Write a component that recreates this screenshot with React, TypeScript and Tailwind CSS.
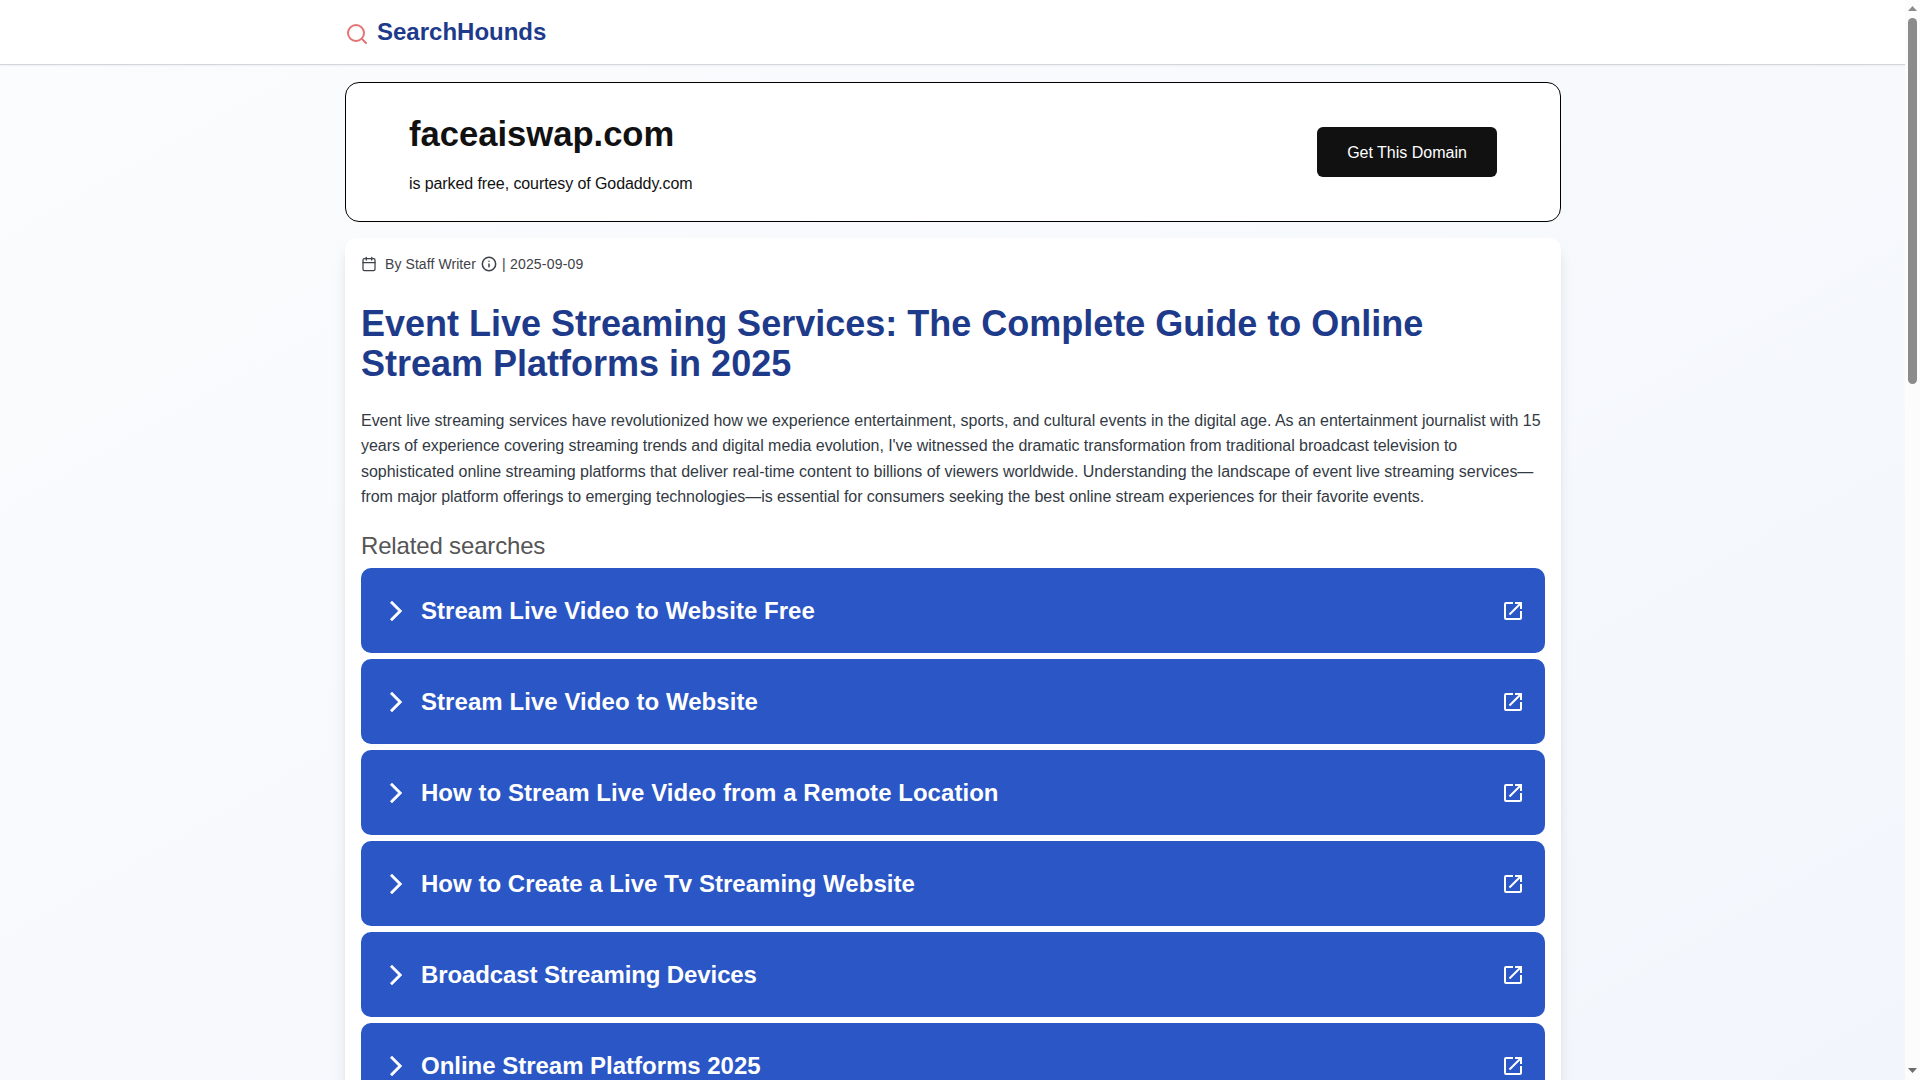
import { Calendar, Info, Search } from "lucide-react";
import { MdOpenInNew } from "react-icons/md";

const paragraph = [
  { text: "Event live streaming services have revolutionized how we experience entertainment, sports, and cultural events in the digital age. As an entertainment journalist with 15", spacing: "tracking-[-0.03px]" },
  { text: "years of experience covering streaming trends and digital media evolution, I've witnessed the dramatic transformation from traditional broadcast television to", spacing: "tracking-[-0.05px]" },
  { text: "sophisticated online streaming platforms that deliver real-time content to billions of viewers worldwide. Understanding the landscape of event live streaming services—", spacing: "tracking-[-0.02px]" },
  { text: "from major platform offerings to emerging technologies—is essential for consumers seeking the best online stream experiences for their favorite events.", spacing: "tracking-[-0.06px]" }
];

const searches = [
  { text: "Stream Live Video to Website Free", spacing: "tracking-[0.04px]" },
  { text: "Stream Live Video to Website", spacing: "tracking-[0.06px]" },
  { text: "How to Stream Live Video from a Remote Location", spacing: "tracking-[0.04px]" },
  { text: "How to Create a Live Tv Streaming Website", spacing: "tracking-[0.02px]" },
  { text: "Broadcast Streaming Devices", spacing: "tracking-[-0.11px]" },
  { text: "Online Stream Platforms 2025", spacing: "tracking-[-0.02px]" }
];

function Header() {
  return (
    <header className="h-[65px] shrink-0 bg-white border-b border-gray-300 shadow-xs">
      <div className="w-[1216px] ml-[345px] h-16 flex items-center gap-2">
        <Search className="w-6 h-6 text-[#e57373] mt-[3px]" strokeWidth={2} />
        <span className="text-2xl font-bold text-[#1e3a8a]">SearchHounds</span>
      </div>
    </header>
  );
}

function DomainBanner() {
  return (
    <section className="h-[140px] shrink-0 bg-white border border-black rounded-[14px] px-[63px] flex items-center justify-between">
      <div className="text-[#111] pt-[5px]">
        <h2 className="text-[34.6px] leading-[40px] font-bold">faceaiswap.com</h2>
        <p className="text-base mt-[18px] tracking-[-0.09px]">is parked free, courtesy of Godaddy.com</p>
      </div>
      <button className="w-[180px] h-[50px] pt-px rounded-md bg-[#111] text-white text-base">Get This Domain</button>
    </section>
  );
}

function ChevronIcon() {
  return (
    <svg className="w-6 h-6 mr-[13px]" viewBox="0 0 24 24" fill="currentColor" stroke="currentColor" strokeWidth={0.5}>
      <path d="M6.23 20.23 8 22l10-10L8 2 6.23 3.77 14.46 12z" />
    </svg>
  );
}

function Article() {
  return (
    <article className="mt-4 bg-white rounded-xl shadow-[0_10px_15px_-3px_rgb(0_0_0/0.13),0_4px_6px_-4px_rgb(0_0_0/0.1)] px-4 pt-4">
      <div className="flex items-center h-5 text-sm text-[#3f4249]">
        <Calendar className="w-4 h-4 mr-2" strokeWidth={1.9} />
        <span className="tracking-[0.08px]">By Staff Writer</span>
        <Info className="w-4 h-4 mx-[5px]" strokeWidth={2.3} />
        <span className="tracking-[0.21px]">| 2025-09-09</span>
      </div>
      <h1 className="mt-[30px] text-4xl font-bold text-[#1e3a8a]">
        Event Live Streaming Services: The Complete Guide to Online
        <br />
        Stream Platforms in 2025
      </h1>
      <p className="mt-6 text-base leading-[25.3px] text-[#333a44] whitespace-nowrap">
        {paragraph.map(line => (
          <span key={line.text} className={`block ${line.spacing}`}>{line.text}</span>
        ))}
      </p>
      <div className="mt-[21px] text-2xl tracking-[-0.16px] text-[#555]">Related searches</div>
      <ul className="mt-[6px] flex flex-col gap-[6px]">
        {searches.map(item => (
          <li key={item.text} className="h-[85px] shrink-0 rounded-[10px] bg-[#2a56c6] text-white flex items-center pl-[23px] pr-5">
            <ChevronIcon />
            <span className={`grow text-2xl font-bold ${item.spacing}`}>{item.text}</span>
            <MdOpenInNew className="w-6 h-6" />
          </li>
        ))}
      </ul>
    </article>
  );
}

function Scrollbar() {
  return (
    <div className="w-[15px] h-full bg-[#fcfcfc] flex flex-col items-center">
      <svg className="w-[9px] h-[5px] mt-[6px] text-[#8b8b8b]" viewBox="0 0 9 5" fill="currentColor">
        <path d="M4.5 0 9 5H0z" />
      </svg>
      <div className="w-[9px] h-[366px] mt-[7px] rounded-full bg-[#8b8b8b]" />
      <svg className="w-[9px] h-[5px] mt-auto mb-[7px] text-[#6b6b6b]" viewBox="0 0 9 5" fill="currentColor">
        <path d="M4.5 5 0 0h9z" />
      </svg>
    </div>
  );
}

export default function App() {
  return (
    <div className="h-[1080px] w-[1920px] flex overflow-hidden font-['Liberation_Sans',Arial,sans-serif]">
      <div className="grow h-full flex flex-col overflow-hidden bg-linear-to-br from-[#fbfcfd] to-[#f2f6fc]">
        <Header />
        <main className="w-[1216px] ml-[345px] pt-[17px]">
          <DomainBanner />
          <Article />
        </main>
      </div>
      <Scrollbar />
    </div>
  );
}
